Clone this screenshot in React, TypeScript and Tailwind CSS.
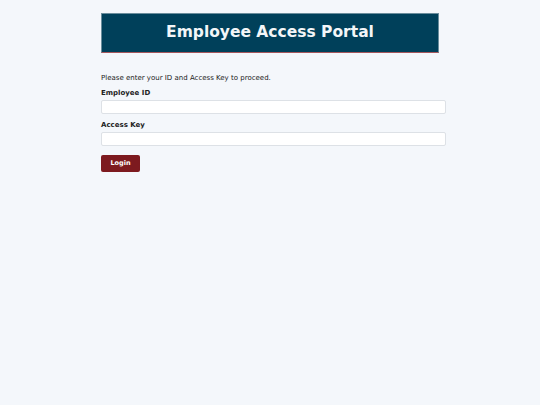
import React from 'react';

const App: React.FC = () => {
  return (
    <div className="min-h-screen bg-[#f4f7fb] font-['DejaVu_Sans',sans-serif] text-[#222]">
      <div className="mx-auto w-[338px] pt-[13px]">
        {/* Header */}
        <div className="flex h-[40px] items-center justify-center border border-[#6a8d9c] border-b-[#a5575c] bg-[#00405a]">
          <h1 className="text-[15.5px] font-bold text-[#f3f6f8]">Employee Access Portal</h1>
        </div>

        {/* Form */}
        <p className="mt-[21px] text-[7px] leading-[9px]">Please enter your ID and Access Key to proceed.</p>

        <label className="mt-[6px] block text-[7px] font-bold leading-[9px]">Employee ID</label>
        <input
          type="text"
          className="mt-[2px] block h-[14px] w-[345px] rounded-[2px] border border-[#dde1e6] bg-white"
        />

        <label className="mt-[7px] block text-[7px] font-bold leading-[9px]">Access Key</label>
        <input
          type="password"
          className="mt-[2px] block h-[14px] w-[345px] rounded-[2px] border border-[#dde1e6] bg-white"
        />

        <button className="mt-[9px] h-[17px] w-[39px] rounded-[2px] bg-[#7d1a1f] text-[6.5px] font-bold text-white">
          Login
        </button>
      </div>
    </div>
  );
};

export default App;
